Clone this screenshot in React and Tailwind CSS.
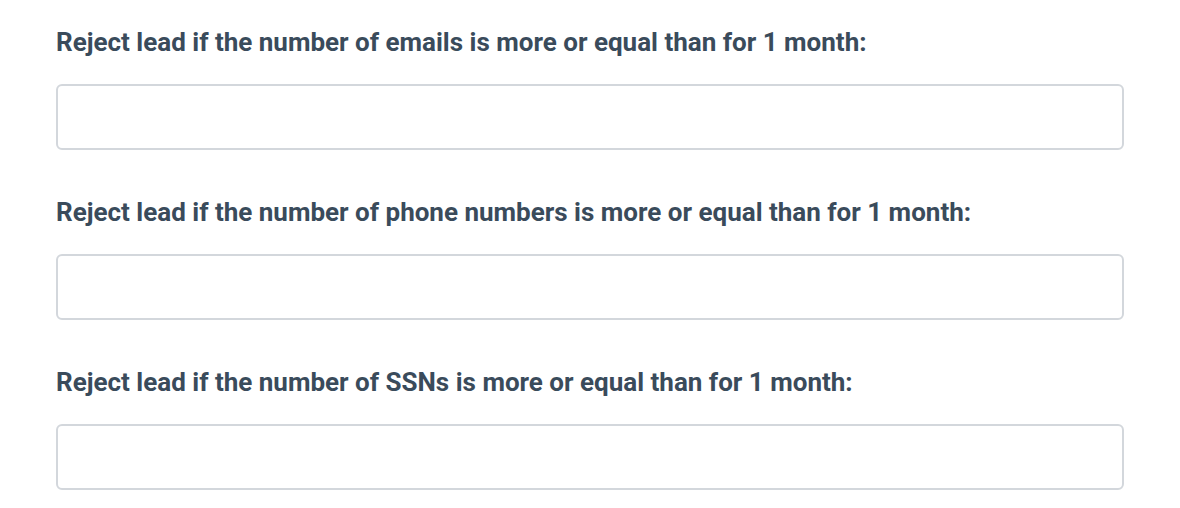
export default function App() {
  const labels = [
    "Reject lead if the number of emails is more or equal than for 1 month:",
    "Reject lead if the number of phone numbers is more or equal than for 1 month:",
    "Reject lead if the number of SSNs is more or equal than for 1 month:",
  ];
  return (
    <div className="w-[1180px] h-[508px] bg-white pl-[56px] pr-[56px] pt-[27px]" style={{ fontFamily: "Roboto, 'Liberation Sans', sans-serif" }}>
      <div className="flex flex-col gap-[47px]">
        {labels.map((l, i) => (
          <div key={i} className="flex flex-col gap-[27px]">
            <label className="text-[26px] leading-[30px] font-bold text-[#3a4b5b]">{l}</label>
            <input className="w-[1068px] h-[66px] border-2 border-[#d3d7dc] rounded-[6px] bg-white outline-none" />
          </div>
        ))}
      </div>
    </div>
  );
}
